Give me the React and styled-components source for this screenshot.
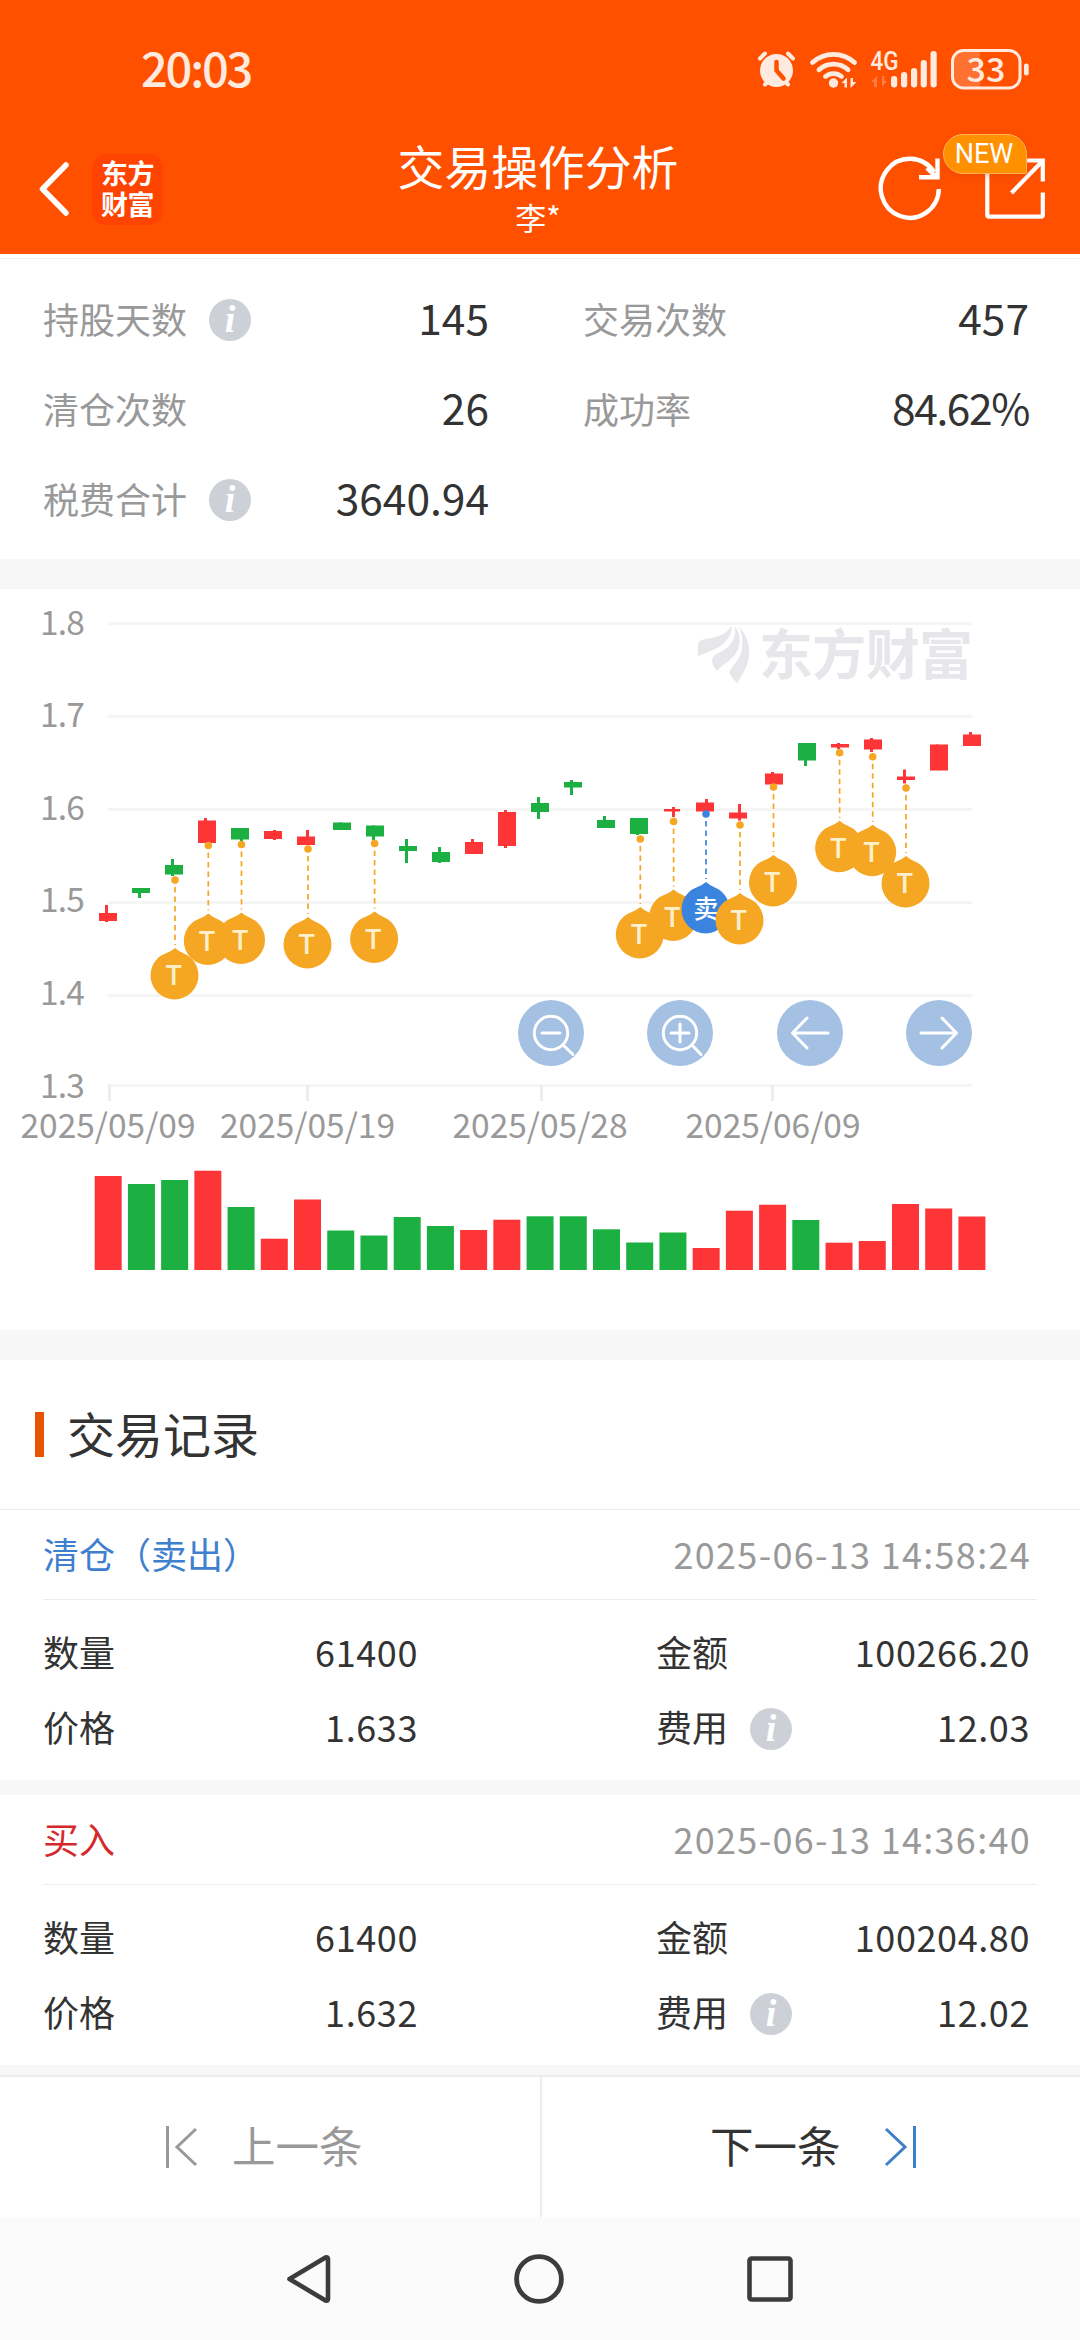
import React from 'react';
import styled, { createGlobalStyle, css } from 'styled-components';

const RED = '#fe3537';
const GREEN = '#1bb041';
const ORANGE = '#f5a623';
const BLUE = '#3a84e0';
const FONT = '"Noto Sans CJK SC", sans-serif';

const GlobalStyle = createGlobalStyle`
	* {
		box-sizing: border-box;
	}
	body {
		margin: 0;
		background: #fff;
		font-family: ${FONT};
		color: #333;
	}
`;

const Screen = styled.div`
	display: flex;
	flex-direction: column;
	width: 1080px;
	height: 2340px;
	overflow: hidden;
`;

const Header = styled.header`
	flex: none;
	height: 254px;
	background: #ff5000;
	color: #fff;
`;

const StatusBar = styled.div`
	display: flex;
	align-items: center;
	height: 124px;
	padding: 14px 50px 0 141px;
	color: #ffeadf;
`;

const Clock = styled.div`
	flex: 1;
	font-size: 47px;
	line-height: 60px;
	font-weight: 500;
	letter-spacing: -2.2px;
	margin-top: -4px;
`;

const TitleBar = styled.div`
	display: flex;
	height: 130px;
	padding: 0 35px 0 38px;
	align-items: center;
`;

const Side = styled.div`
	flex: 1;
	display: flex;
	align-items: center;
	justify-content: ${({ end }) => (end ? 'flex-end' : 'flex-start')};
	gap: ${({ end }) => (end ? '42px' : '22px')};
`;

const AppLogo = styled.div`
	width: 71px;
	height: 71px;
	border-radius: 14px;
	background: #ff4300;
	font-size: 27px;
	font-weight: 700;
	line-height: 31px;
	letter-spacing: -0.5px;
	text-align: center;
	padding-top: 3px;
`;

const Title = styled.h1`
	margin: 0 7px 0 0;
	font-size: 46.8px;
	line-height: 56px;
	font-weight: 400;
	text-align: center;
	small {
		display: block;
		font-size: 31px;
		line-height: 48px;
	}
`;

const ShareButton = styled.div`
	position: relative;
	display: flex;
`;

const NewBadge = styled.span`
	position: absolute;
	left: -42px;
	top: -24px;
	width: 84px;
	height: 40px;
	border: 1px solid #ffb45c;
	border-radius: 20px 20px 2px 20px;
	background: #ff9000;
	font: 27px/39px Roboto, sans-serif;
	text-align: center;
	padding-right: 2px;
	box-shadow: 0 3px 6px rgba(200, 60, 0, 0.25);
`;

const Stats = styled.section`
	flex: none;
	display: grid;
	grid-template-columns: 1fr 1fr;
	grid-auto-rows: 90px;
	margin-top: 4px;
	padding: 16px 0 14px;
	border-top: 1px solid #eee;
`;

const StatCell = styled.div`
	display: flex;
	align-items: center;
	padding: 0 51px 0 43px;
	font-size: 36px;
	color: #999;
`;

const StatValue = styled.span`
	flex: 1;
	text-align: right;
	font-size: 42.5px;
	line-height: 60px;
	letter-spacing: ${({ percent }) => (percent ? '-1.4px' : '0')};
	margin-top: -6px;
	color: #333;
`;

const Label = styled.span`
	line-height: 50px;
	margin-top: -4px;
`;

const InfoDot = styled.i`
	width: 42px;
	height: 42px;
	margin-left: 22px;
	border-radius: 50%;
	background: #cdd1d7;
	color: #fff;
	font: italic bold 38px/40px "Liberation Serif", serif;
	text-align: center;
`;

const Band = styled.div`
	flex: none;
	height: ${({ size }) => size}px;
	background: #f7f7f7;
`;

const ChartArea = styled.section`
	position: relative;
	flex: none;
	height: 741px;
	svg {
		display: block;
	}
`;

const ChartTools = styled.div`
	position: absolute;
	left: 518px;
	top: 411px;
	width: 454px;
	display: flex;
	justify-content: space-between;
`;

const ToolButton = styled.div`
	width: 66px;
	height: 66px;
	border-radius: 50%;
	background: #a4c1e3;
`;

const SectionTitle = styled.h2`
	flex: none;
	display: flex;
	align-items: center;
	height: 150px;
	margin: 0;
	padding-left: 35px;
	border-bottom: 1px solid #ececec;
	font-size: 48px;
	font-weight: 400;
	&::before {
		content: '';
		width: 9px;
		height: 45px;
		margin-right: 23px;
		background: #e85500;
	}
	span {
		line-height: 60px;
		margin-top: -6px;
	}
`;

const RecordBlock = styled.article`
	flex: none;
	height: 270px;
	padding-left: 43px;
	font-size: 36px;
`;

const RecordHead = styled.div`
	display: flex;
	align-items: center;
	justify-content: space-between;
	height: 90px;
	width: 994px;
	padding-right: 6px;
	border-bottom: 1px solid #ececec;
`;

const styleSide = css`
	color: ${({ side }) => (side === 'sell' ? '#3e7fcf' : '#d5282c')};
`;

const TradeType = styled.span`
	line-height: 50px;
	margin-top: -3px;
	${styleSide};
`;

const Stamp = styled.time`
	line-height: 50px;
	margin-top: -3px;
	letter-spacing: 1.3px;
	color: #999;
`;

const RecordGrid = styled.div`
	display: grid;
	grid-template-columns: 375px 374px;
	column-gap: 238px;
	grid-auto-rows: 75px;
	padding-top: 16px;
`;

const Field = styled.div`
	display: flex;
	align-items: center;
`;

const FieldLabel = styled(Label)`
	margin-top: -5px;
`;

const FieldValue = styled.span`
	flex: 1;
	text-align: right;
	line-height: 50px;
	letter-spacing: 0.6px;
	margin-top: -5px;
`;

const Footer = styled.footer`
	flex: none;
	display: grid;
	grid-template-columns: 1fr 1fr;
	height: 142px;
	border-top: 2px solid #ececec;
`;

const PageButton = styled.div`
	display: flex;
	align-items: center;
	gap: ${({ next }) => (next ? '38px' : '34px')};
	padding-left: ${({ next }) => (next ? '168px' : '165px')};
	font-size: 43.5px;
	color: ${({ next }) => (next ? '#333' : '#999')};
	${({ next }) =>
		next &&
		css`
			border-left: 2px solid #ececec;
		`}
	span {
		line-height: 60px;
		margin-top: -5px;
	}
`;

const SystemNav = styled.nav`
	flex: none;
	display: flex;
	align-items: center;
	justify-content: space-between;
	height: 123px;
	padding: 0 286px;
	background: #fbfbfb;
`;

const stats = [
	{ label: '持股天数', value: '145', info: true },
	{ label: '交易次数', value: '457' },
	{ label: '清仓次数', value: '26' },
	{ label: '成功率', value: '84.62%', percent: true },
	{ label: '税费合计', value: '3640.94', info: true },
];

// [color, body x, body top, body bottom, body width, wick x, wick top, wick bottom]
const candles = [
	[RED, 99, 913, 921, 18, 105, 905, 922],
	[GREEN, 132, 888, 893, 18, 138, 888, 898],
	[GREEN, 165, 865, 874.5, 18, 171, 859, 876],
	[RED, 198, 820.5, 843, 18, 204, 818, 843],
	[GREEN, 231, 828, 839.5, 18, 240, 828, 841],
	[RED, 264, 831, 839, 18, 273, 830, 840],
	[RED, 297, 836.5, 845, 18, 306, 830, 845],
	[GREEN, 333, 822.5, 830, 18, 339, 822.5, 830],
	[GREEN, 366, 825.5, 836.5, 18, 372, 825.5, 840],
	[GREEN, 399, 846, 851, 18, 405, 839, 863],
	[GREEN, 432, 852, 862, 18, 438, 847, 863],
	[RED, 465, 842, 854, 18, 471, 839, 854],
	[RED, 498, 812, 846, 18, 504, 810, 848],
	[GREEN, 531, 803, 812, 18, 537, 797, 819],
	[GREEN, 564, 782, 787.5, 18, 570, 780, 795],
	[GREEN, 597, 820, 828, 18, 603, 816, 828],
	[GREEN, 630, 818, 834, 18, 636, 818, 835],
	[RED, 664, 809, 811.5, 16, 672, 807, 817],
	[RED, 696, 802.5, 811.5, 18, 705, 799, 811],
	[RED, 729, 812.5, 818.5, 18, 738, 804, 820.5],
	[RED, 765, 773.5, 784.5, 18, 771, 772, 784],
	[GREEN, 798, 743, 760.5, 18, 804, 743, 766],
	[RED, 831, 744, 747.5, 18, 837, 743, 749],
	[RED, 864, 739.5, 749.5, 18, 870, 738, 752],
	[RED, 897, 776.5, 780, 18, 903, 769.5, 783.5],
	[RED, 930, 744.5, 770.5, 18, 936, 744.5, 770],
	[RED, 963, 734.5, 746, 18, 969, 732, 746],
];

// [x, dot y, mark]
const pins = [
	[175, 880, 'T'],
	[208.3, 845.5, 'T'],
	[241.5, 844.5, 'T'],
	[308, 849, 'T'],
	[374.6, 843.5, 'T'],
	[640.3, 839, 'T'],
	[673.6, 821.5, 'T'],
	[706, 814, '卖'],
	[740, 825, 'T'],
	[773.5, 787, 'T'],
	[839.6, 752.7, 'T'],
	[872.7, 756.7, 'T'],
	[906, 788, 'T'],
];

const volumes = [
	[RED, 94], [GREEN, 86], [GREEN, 90], [RED, 99.3], [GREEN, 63], [RED, 31.3], [RED, 70.5],
	[GREEN, 39.5], [GREEN, 34.5], [GREEN, 53], [GREEN, 44], [RED, 40], [RED, 50.3], [GREEN, 53.7],
	[GREEN, 53.7], [GREEN, 40.7], [GREEN, 27.5], [GREEN, 37.5], [RED, 22], [RED, 59.3], [RED, 65.3],
	[GREEN, 50], [RED, 27.3], [RED, 29], [RED, 66], [RED, 61.5], [RED, 53.5],
];

const levels = [
	['1.8', 622, 635],
	['1.7', 715, 727],
	['1.6', 808, 820],
	['1.5', 901, 912],
	['1.4', 994, 1005],
	['1.3', 1084, 1098],
];

const dates = [
	['2025/05/09', 108, 108],
	['2025/05/19', 306, 307.5],
	['2025/05/28', 540, 540],
	['2025/06/09', 771, 773],
];

const records = [
	{
		side: 'sell',
		type: '清仓（卖出）',
		time: '2025-06-13 14:58:24',
		count: '61400',
		amount: '100266.20',
		price: '1.633',
		fee: '12.03',
	},
	{
		side: 'buy',
		type: '买入',
		time: '2025-06-13 14:36:40',
		count: '61400',
		amount: '100204.80',
		price: '1.632',
		fee: '12.02',
	},
];

function StatusIcons() {
	return (
		<svg width="274" height="62" viewBox="757 38 274 62" fill="#ffeadf">
			{/* alarm */}
			<circle cx="777.5" cy="70.500" r="16.5" />
			<g stroke="#ffeadf" strokeWidth="4" strokeLinecap="round" fill="none">
				<path d="M761 58.500l5-5M794 58.500l-5-5M766 84.500l4-4M789 84.500l-4-4" />
				<path d="M777.5 62v8.500l7 8" stroke="#ff5000" strokeWidth="4.500" />
			</g>
			{/* wifi */}
			<g fill="none" stroke="#ffeadf" strokeWidth="4.8" strokeLinecap="round">
				<path d="M813.500 62.500a31 31 0 0 1 42 0" />
				<path d="M820 69.800a21.500 21.500 0 0 1 29 0" />
				<path d="M826.500 76.500a12.500 12.500 0 0 1 16 0" />
			</g>
			<circle cx="834.500" cy="83" r="4.700" />
			<path d="M842.500 83l5.500-5.500v10h-2.500v-4.500zM857.500 82l-6 6v-10h2.500v4z" />
			{/* mobile signal */}
			<text x="871.500" y="69.500" fontFamily="Roboto" fontSize="25" fontWeight="500" textLength="28" lengthAdjust="spacingAndGlyphs">4G</text>
			<path d="M872 82l6-6v11h-3v-5zM888 81l-5 6v-11h2.500v5z" opacity=".3" />
			<rect x="892" y="76" width="6.200" height="11.500" rx="3" />
			<rect x="902" y="72" width="6.200" height="15.500" rx="3" />
			<rect x="912" y="68" width="6.200" height="19.500" rx="3" />
			<rect x="921.700" y="60" width="6.200" height="27.500" rx="3" />
			<rect x="931.500" y="51" width="6.200" height="36.500" rx="3" />
			{/* battery */}
			<path d="M981 51v36h-16a11 11 0 0 1-11-11v-14a11 11 0 0 1 11-11z" opacity=".22" />
			<rect x="953.500" y="50.500" width="67.500" height="37.500" rx="11" fill="none" stroke="#ffeadf" strokeWidth="3" />
			<rect x="1025" y="63.500" width="4.700" height="12" rx="2.300" />
			<text x="987" y="82" fontFamily="Noto Sans CJK SC" fontSize="34" fontWeight="500" textAnchor="middle">33</text>
		</svg>
	);
}

function Pin({ x, y, mark }) {
	const sell = mark !== 'T';
	const color = sell ? BLUE : ORANGE;
	return (
		<g>
			<circle cx={x} cy={y} r="3.8" fill={color} />
			<path d={`M${x} ${y + 7}v58`} stroke={color} strokeWidth="1.7" strokeDasharray="5.500 4" />
			<path
				fill={color}
				d={`M${x} ${y + 68}c5.500 4.800 10.500 5 16 10a24 24 0 1 1 -33 0c5.500 -5 11.500 -5.200 17 -10z`}
			/>
			{sell ? (
				<text x={x} y={y + 103.500} fill="#fff" fontFamily="Noto Sans CJK SC" fontSize="25" fontWeight="500" textAnchor="middle">{mark}</text>
			) : (
				<text x={x - 1.300} y={y + 105.300} fill="#fff0cc" fontFamily="Roboto" fontSize="27" fontWeight="500" textAnchor="middle">{mark}</text>
			)}
		</g>
	);
}

function TradeChart() {
	return (
		<svg width="1080" height="741" viewBox="0 589 1080 741" fontFamily="Noto Sans CJK SC">
			<g fill="#e7e7eb">
				<path d="M698 656v-11c0-4 3-5 7-6c11-1 20-4 27-13c0 8-5 16-13 21c-7 4-14 6-21 9z" />
				<path d="M712 659c3-6 11-7 17-13c5-6 7-12 6-20c8 12 5 24-2 31c-6 6-11 8-16 14c-3-3-5-8-5-12z" />
				<path d="M739 627c8 8 11 18 10 28c-1 11-6 19-12 28c-3-3-6-6-8-11c5-8 12-14 13-24c1-8 0-14-3-21z" />
				<text x="759" y="674.500" fontSize="54" fontWeight="700" textLength="214">东方财富</text>
			</g>
			{levels.map(([label, y, base]) => (
				<g key={label}>
					<rect x="108" y={y} width="864" height="3" fill="#f5f5f5" />
					<text x="84" y={base} fontSize="33.5" fill="#999" textAnchor="end" letterSpacing="-.8">{label}</text>
				</g>
			))}
			{dates.map(([label, x, center]) => (
				<g key={label}>
					<rect x={x} y="1085" width="3" height="16" fill="#ededed" />
					<text x={center} y="1138" fontSize="33.5" fill="#999" textAnchor="middle">{label}</text>
				</g>
			))}
			{candles.map(([color, x, top, bottom, width, wx, wTop, wBottom]) => (
				<g key={x} fill={color}>
					<rect x={x} y={top} width={width} height={bottom - top} />
					<rect x={wx} y={wTop} width="3" height={wBottom - wTop} />
				</g>
			))}
			{pins.map(([x, y, mark]) => (
				<Pin key={x} x={x} y={y} mark={mark} />
			))}
			{volumes.map(([color, height], i) => (
				<rect key={i} x={94.700 + i * 33.220} y={1270 - height} width="27" height={height} fill={color} />
			))}
		</svg>
	);
}

const toolPaths = [
	'M24 33h18M45 45l10 9.500',
	'M24 33h18M33 24v18M45 45l9 9.500',
	'M51 33H16M30 18L15.500 33L30 48',
	'M15 33h35M36 18l14.500 15L36 48',
];

function Tools() {
	return (
		<ChartTools>
			{toolPaths.map((d, i) => (
				<ToolButton key={d}>
					<svg width="66" height="66" fill="none" stroke="#fff" strokeWidth="3" strokeLinecap="round" strokeLinejoin="round">
						{i < 2 && <circle cx="33" cy="33" r="16.7" />}
						<path d={d} />
					</svg>
				</ToolButton>
			))}
		</ChartTools>
	);
}

function Record({ side, type, time, count, amount, price, fee }) {
	return (
		<RecordBlock>
			<RecordHead>
				<TradeType side={side}>{type}</TradeType>
				<Stamp>{time}</Stamp>
			</RecordHead>
			<RecordGrid>
				<Field>
					<FieldLabel>数量</FieldLabel>
					<FieldValue>{count}</FieldValue>
				</Field>
				<Field>
					<FieldLabel>金额</FieldLabel>
					<FieldValue>{amount}</FieldValue>
				</Field>
				<Field>
					<FieldLabel>价格</FieldLabel>
					<FieldValue>{price}</FieldValue>
				</Field>
				<Field>
					<FieldLabel>费用</FieldLabel>
					<InfoDot>i</InfoDot>
					<FieldValue>{fee}</FieldValue>
				</Field>
			</RecordGrid>
		</RecordBlock>
	);
}

function App() {
	return (
		<Screen>
			<GlobalStyle />
			<Header>
				<StatusBar>
					<Clock>20:03</Clock>
					<StatusIcons />
				</StatusBar>
				<TitleBar>
					<Side>
						<svg width="32" height="56" fill="none" stroke="#fff" strokeWidth="5.5" strokeLinecap="round" strokeLinejoin="round">
							<path d="M28 4L4.500 28L28 52" />
						</svg>
						<AppLogo>东方<br />财富</AppLogo>
					</Side>
					<Title>
						交易操作分析
						<small>李*</small>
					</Title>
					<Side end>
						<svg width="66" height="66" viewBox="876 156 66 66" fill="none" stroke="#fff" strokeWidth="4.4">
							<path d="M937.800 189A29 29.500 0 1 1 933 172" />
							<path d="M936.500 158.500V177.300H918M926 168l9 9" />
						</svg>
						<ShareButton>
							<svg width="60" height="62" viewBox="985 158 60 62" fill="none" stroke="#fff" strokeWidth="4.2">
								<path d="M1026 160.500h16.800v21M1042.500 161L1011.500 193M987.300 172v43q0 1.700 1.700 1.700h52q1.800 0 1.800-1.700V192.500" />
							</svg>
							<NewBadge>NEW</NewBadge>
						</ShareButton>
					</Side>
				</TitleBar>
			</Header>
			<Stats>
				{stats.map(({ label, value, info, percent }) => (
					<StatCell key={label}>
						<Label>{label}</Label>
						{info && <InfoDot>i</InfoDot>}
						<StatValue percent={percent}>{value}</StatValue>
					</StatCell>
				))}
			</Stats>
			<Band size={30} />
			<ChartArea>
				<TradeChart />
				<Tools />
			</ChartArea>
			<Band size={30} />
			<SectionTitle>
				<span>交易记录</span>
			</SectionTitle>
			<Record {...records[0]} />
			<Band size={15} />
			<Record {...records[1]} />
			<Band size={10} />
			<Footer>
				<PageButton>
					<svg width="33" height="44" fill="none" stroke="#999" strokeWidth="3">
						<path d="M2.500 1v42M31 4L12 22L31 40" />
					</svg>
					<span>上一条</span>
				</PageButton>
				<PageButton next>
					<span>下一条</span>
					<svg width="40" height="44" fill="none" stroke="#3e7fc9" strokeWidth="3">
						<path d="M7 4L26 22L7 40M35.500 1v42" />
					</svg>
				</PageButton>
			</Footer>
			<SystemNav>
				<svg width="46" height="52" fill="none" stroke="#3c3c3c" strokeWidth="4.6" strokeLinejoin="round">
					<path d="M3.500 26L39.500 4.500q2.500-1 2.500 1.500v40q0 2.500-2.500 1.500z" />
				</svg>
				<svg width="50" height="50" fill="none" stroke="#3c3c3c" strokeWidth="4.8">
					<circle cx="25" cy="25" r="22.400" />
				</svg>
				<svg width="48" height="48" fill="none" stroke="#3c3c3c" strokeWidth="4.6">
					<rect x="3.500" y="3.500" width="41" height="41" rx="2" />
				</svg>
			</SystemNav>
		</Screen>
	);
}

export default App;
